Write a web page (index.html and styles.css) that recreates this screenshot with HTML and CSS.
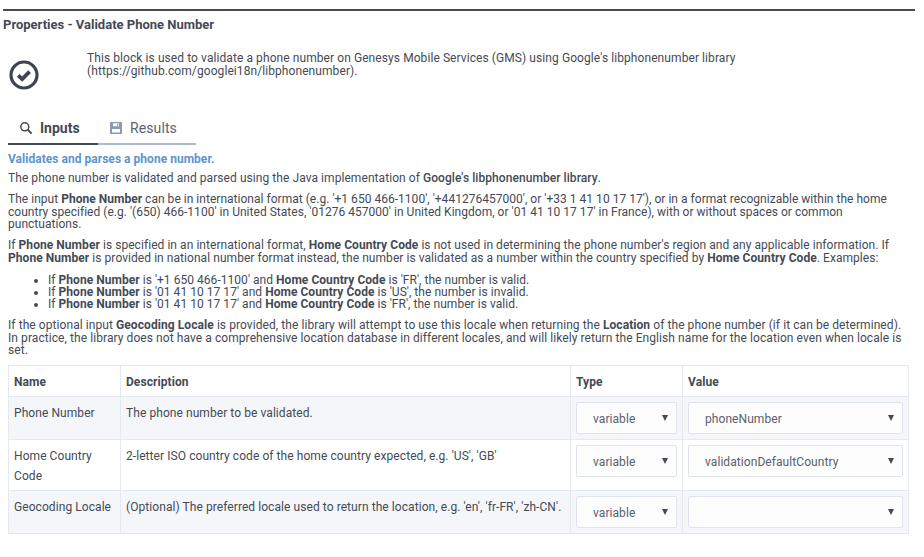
FILE: index.html
```html
<!DOCTYPE html>
<html lang="en">
<head>
<meta charset="utf-8">
<title>Properties - Validate Phone Number</title>
<link rel="stylesheet" href="styles.css">
</head>
<body>
<div class="panel">
  <h1 class="title">Properties - Validate Phone Number</h1>
  <div class="intro">
    <svg class="block-icon" viewBox="0 0 32 32" width="32" height="32" aria-hidden="true">
      <circle cx="16" cy="16" r="13" fill="none" stroke="#3f4450" stroke-width="3.2"/>
      <path d="M10.2 16.4l4 3.8 7.4-7.6" fill="none" stroke="#3f4450" stroke-width="3.8"/>
    </svg>
    <p class="intro-text">This block is used to validate a phone number on Genesys Mobile Services (GMS) using Google's libphonenumber library (https://github.com/googlei18n/libphonenumber).</p>
  </div>
  <div class="tabs">
    <div class="tab active">
      <svg viewBox="0 0 14 14" width="14" height="14" aria-hidden="true"><circle cx="5.8" cy="5.8" r="4" fill="none" stroke="#444a55" stroke-width="1.5"/><path d="M8.8 8.8l3.8 3.8" stroke="#444a55" stroke-width="2"/></svg>
      <span>Inputs</span>
    </div>
    <div class="tab">
      <svg viewBox="0 0 14 14" width="14" height="14" aria-hidden="true"><path fill-rule="evenodd" d="M1 1h12v12H1zM4 2.2v3h6v-3zM3 8v3.6h8V8z" fill="#8c9cb0"/><path d="M7.8 2.8h1.4v2H7.8z" fill="#8c9cb0"/></svg>
      <span>Results</span>
    </div>
  </div>
  <div class="content">
    <p class="lead">Validates and parses a phone number.</p>
    <p class="first">The phone number is validated and parsed using the Java implementation of <b class="med">Google's libphonenumber library</b>.</p>
    <p class="tight">The input <b>Phone Number</b> can be in international format (e.g. '+1 650 466-1100', '+441276457000', or '+33 1 41 10 17 17'), or in a format recognizable within the home country specified (e.g. '(650) 466-1100' in United States, '01276 457000' in United Kingdom, or '01 41 10 17 17' in France), with or without spaces or common punctuations.</p>
    <p class="second">If <b>Phone Number</b> is specified in an international format, <b>Home Country Code</b> is not used in determining the phone number's region and any applicable information. If <b>Phone Number</b> is provided in national number format instead, the number is validated as a number within the country specified by <b>Home Country Code</b>. Examples:</p>
    <ul>
      <li>If <b>Phone Number</b> is '+1 650 466-1100' and <b>Home Country Code</b> is 'FR', the number is valid.</li>
      <li>If <b>Phone Number</b> is '01 41 10 17 17' and <b>Home Country Code</b> is 'US', the number is invalid.</li>
      <li>If <b>Phone Number</b> is '01 41 10 17 17' and <b>Home Country Code</b> is 'FR', the number is valid.</li>
    </ul>
    <p class="last">If the optional input <b>Geocoding Locale</b> is provided, the library will attempt to use this locale when returning the <b>Location</b> of the phone number (if it can be determined). In practice, the library does not have a comprehensive location database in different locales, and will likely return the English name for the location even when locale is set.</p>
    <table>
      <thead>
        <tr><th class="c-name">Name</th><th class="c-desc">Description</th><th class="c-type">Type</th><th>Value</th></tr>
      </thead>
      <tbody>
        <tr class="odd">
          <td>Phone Number</td><td>The phone number to be validated.</td>
          <td><div class="select">variable</div></td><td><div class="select">phoneNumber</div></td>
        </tr>
        <tr>
          <td>Home Country Code</td><td>2-letter ISO country code of the home country expected, e.g. 'US', 'GB'</td>
          <td><div class="select">variable</div></td><td><div class="select">validationDefaultCountry</div></td>
        </tr>
        <tr class="odd">
          <td>Geocoding Locale</td><td>(Optional) The preferred locale used to return the location, e.g. 'en', 'fr-FR', 'zh-CN'.</td>
          <td><div class="select">variable</div></td><td><div class="select"></div></td>
        </tr>
      </tbody>
    </table>
  </div>
</div>
</body>
</html>
```
FILE: styles.css
```css
* { box-sizing: border-box; }
html, body { margin: 0; background: #fff; }
body { font-family: Roboto, "Liberation Sans", sans-serif; font-size: 12px; letter-spacing: .07px; color: #444a55; height: 557px; overflow: hidden; }
.panel { margin: 9px 9px 0 3px; border-top: 2px solid #444a55; }
.title { margin: 0; padding-top: 7px; font-size: 13px; line-height: 14px; font-weight: 700; letter-spacing: 0; }
.intro { display: flex; padding: 20px 0 0 4.5px; height: 83px; }
.block-icon { margin-top: 6.5px; flex: none; }
.intro-text { margin: 0 0 0 47.5px; width: 690px; line-height: 12.5px; letter-spacing: .08px; }
.tabs { display: flex; margin-left: 5px; width: 188px; height: 30px; }
.tab { display: flex; align-items: center; gap: 7px; height: 30px; padding: 3px 0 5px 11px; font-size: 14px; border-bottom: 2px solid #adbbcb; letter-spacing: 0; }
.tab:first-child { width: 90px; }
.tab:last-child { flex: 1; padding-left: 11px; gap: 7px; color: #5b6270; letter-spacing: .1px; }
.tab.active { border-bottom-color: #444a55; font-weight: 700; }
.content { padding: 7px 6px 0 5px; }
.content p { margin: 0 0 9px; line-height: 12.5px; letter-spacing: .055px; }
.content p.lead { color: #5c94cf; font-weight: 700; margin-bottom: 5px; line-height: 14px; letter-spacing: .03px; }
.content p.first { margin-bottom: 8.25px; line-height: 14px; letter-spacing: .065px; }
.content p.tight { letter-spacing: .025px; margin-bottom: 8.5px; }
.content p.second { margin-bottom: 9.5px; }
.content p.last { margin-bottom: 8.25px; letter-spacing: .075px; }
b { font-weight: 700; }
b.med { font-weight: 500; }
ul { margin: 0 0 9.5px; padding: 0 0 0 40px; line-height: 12px; letter-spacing: .04px; }
table { border-collapse: collapse; width: 901px; table-layout: fixed; }
th, td { border: 1px solid #e4e9f0; text-align: left; vertical-align: top; line-height: 20px; font-size: 12px; }
th { font-weight: 700; padding: 6px 5px 4px; height: 31px; }
td { padding: 6px 5px 4px; }
td:nth-child(3), td:nth-child(4) { padding: 5px; }
.c-name { width: 112px; }
.c-desc { width: 450px; }
.c-type { width: 112px; }
tr.odd td { background: #f4f6fa; }
.select { position: relative; height: 32px; border: 1px solid #dfe4ec; border-radius: 2px; background: #fdfdfe; padding: 6px 0 0 16px; color: #59606d; }
.select::after { content: ""; position: absolute; right: 8px; top: 12px; border: 3px solid transparent; border-top: 6px solid #444a55; border-bottom: 0; }
```
